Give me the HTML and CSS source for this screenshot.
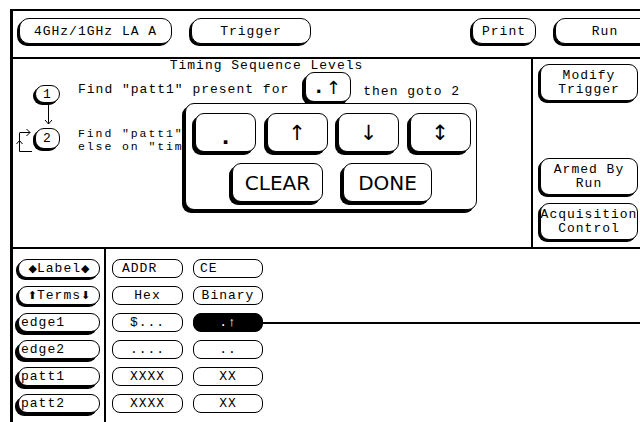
FILE: index.html
```html
<!DOCTYPE html>
<html lang="en">
<head>
<meta charset="UTF-8" />
<meta name="viewport" content="width=device-width, initial-scale=1" />
<title>Timing Sequence Levels</title>
<link rel="stylesheet" href="styles.css">
</head>
<body>

<div class="screen">
  <div class="topbar">
    <div class="key top k-mode">4GHz/1GHz LA A</div>
    <div class="key top k-menu">Trigger</div>
    <div class="key top k-print">Print</div>
    <div class="key top k-run">Run</div>
  </div>

  <div class="main">
    <div class="seq">
      <div class="seq-title">Timing Sequence Levels</div>

      <div class="level">
        <div class="key num">1</div>
        <div class="find">Find "patt1" present for</div>
        <div class="key dur">.<span class="dur-arrow">↑</span></div>
        <div class="then">then goto 2</div>
      </div>

      <div class="connector">
        <svg width="12" height="24" viewBox="0 0 12 24">
          <path d="M5.5 2 V22 M2 18 L5.5 22 L9 18" fill="none" stroke="#000" stroke-width="1"/>
        </svg>
      </div>

      <div class="level level-two">
        <svg class="loop" width="19" height="26" viewBox="0 0 19 26">
          <path d="M3.5 6 V24.5 H16 M3.5 5.5 H14 M10.5 2 L14 5.5 L10.5 9 M0.5 17 L3.5 13.5 L6.5 17" fill="none" stroke="#000" stroke-width="1"/>
        </svg>
        <div class="key num num-two">2</div>
        <div class="find find-two">Find "patt1"<br>else on "tim</div>
      </div>

      <div class="popup">
        <div class="popup-row">
          <div class="key pick"><span class="dot">.</span></div>
          <div class="key pick">↑</div>
          <div class="key pick">↓</div>
          <div class="key pick">↕</div>
        </div>
        <div class="popup-row popup-actions">
          <div class="key act act-clear">CLEAR</div>
          <div class="key act act-done">DONE</div>
        </div>
      </div>
    </div>

    <div class="side">
      <div class="key side-key">Modify<br>Trigger</div>
      <div class="key side-key armed">Armed By<br>Run</div>
      <div class="key side-key">Acquisition<br>Control</div>
    </div>
  </div>

  <div class="lower">
    <div class="labels">
      <div class="key lab lab-center"><span class="tri">◆</span>Label<span class="tri">◆</span></div>
      <div class="key lab lab-center"><span class="tri">⬆</span> Terms <span class="tri">⬇</span></div>
      <div class="key lab">edge1</div>
      <div class="key lab">edge2</div>
      <div class="key lab">patt1</div>
      <div class="key lab">patt2</div>
    </div>

    <div class="cells">
      <div class="cell left">ADDR</div>
      <div class="cell left small-pad">CE</div>
      <div class="cell">Hex</div>
      <div class="cell">Binary</div>
      <div class="cell">$...</div>
      <div class="cell active">.↑</div>
      <div class="cell">....</div>
      <div class="cell">..</div>
      <div class="cell">XXXX</div>
      <div class="cell">XX</div>
      <div class="cell">XXXX</div>
      <div class="cell">XX</div>
    </div>
  </div>
</div>

</body>
</html>
```

FILE: styles.css
```css
* {
  box-sizing: border-box;
}
body {
  margin: 0;
  width: 640px;
  height: 422px;
  overflow: hidden;
  background: #fff;
  color: #000;
  font-family: "Liberation Mono", "DejaVu Sans Mono", monospace;
  font-size: 13px;
  letter-spacing: 1px;
}
.screen {
  margin: 9px 0 0 10px;
  height: 413px;
  border-top: 2px solid #000;
  border-left: 3px solid #000;
}
.key {
  display: flex;
  align-items: center;
  justify-content: center;
  flex-shrink: 0;
  background: #fff;
  border: 1px solid #000;
  border-radius: 9px;
  box-shadow: -2px 2px 0 #000;
  white-space: nowrap;
}

/* top bar */
.topbar {
  display: flex;
  align-items: flex-start;
  height: 48px;
  padding: 7px 0 0 6px;
  border-bottom: 2px solid #000;
}
.top {
  height: 26px;
  border-radius: 10px;
}
.k-mode {
  width: 153px;
}
.k-menu {
  width: 120px;
  margin-left: 19px;
}
.k-print {
  width: 64px;
  margin-left: 161px;
}
.k-run {
  width: 100px;
  margin-left: 19px;
}

/* sequence area */
.main {
  display: grid;
  grid-template-columns: 520px 1fr;
  height: 190px;
  border-bottom: 2px solid #000;
}
.seq {
  position: relative;
  border-right: 2px solid #000;
}
.seq-title {
  height: 13px;
  line-height: 13px;
  padding-right: 11px;
  text-align: center;
}
.level {
  display: flex;
  align-items: flex-start;
  height: 30px;
}
.num {
  width: 25px;
  height: 18px;
  margin: 13px 0 0 22px;
}
.find {
  margin: 11px 0 0 18px;
  line-height: 13px;
}
.dur {
  width: 46px;
  height: 30px;
  margin-left: 16px;
  box-shadow: -3px 3px 0 #000;
  font-family: "DejaVu Sans", sans-serif;
  font-size: 17px;
  font-weight: bold;
  letter-spacing: 0;
}
.dur-arrow {
  margin-left: 4px;
  font-weight: normal;
  font-size: 18px;
}
.then {
  margin: 13px 0 0 12px;
  line-height: 13px;
}
.connector {
  height: 24px;
  padding-left: 30px;
}
.connector svg {
  display: block;
}
.level-two {
  height: 40px;
}
.loop {
  margin: 1px 0 0 3px;
}
.num-two {
  height: 21px;
  margin: 2px 0 0 0;
}
.find-two {
  margin-top: 1px;
  font-size: 11.5px;
  letter-spacing: 1.9px;
  line-height: 13px;
}

/* level picker pop-up */
.popup {
  position: absolute;
  left: 172px;
  top: 44px;
  width: 292px;
  height: 107px;
  padding: 9px 7px 0 9px;
  background: #fff;
  border: 1px solid #000;
  border-radius: 9px;
  box-shadow: -3px 3px 0 #000;
}
.popup-row {
  display: flex;
  gap: 10.5px;
}
.pick {
  width: 61px;
  height: 39px;
  box-shadow: -3px 3px 0 #000;
  font-family: "DejaVu Sans", sans-serif;
  font-size: 21px;
  letter-spacing: 0;
}
.dot {
  font-weight: bold;
  font-size: 20px;
  margin-top: 8px;
}
.popup-actions {
  justify-content: center;
  gap: 20px;
  margin-top: 11px;
}
.act {
  height: 39px;
  box-shadow: -3px 3px 0 #000;
  font-family: "DejaVu Sans", sans-serif;
  font-size: 20px;
  letter-spacing: 0;
}
.act-clear {
  width: 91px;
}
.act-done {
  width: 89px;
}

/* right column */
.side {
  display: flex;
  flex-direction: column;
  align-items: flex-start;
  padding: 5px 0 7px 7px;
}
.side-key {
  width: 98px;
  height: 37px;
  line-height: 14px;
  text-align: center;
}
.armed {
  margin-top: auto;
  margin-bottom: 8px;
}

/* label / terms table */
.lower {
  display: grid;
  grid-template-columns: 93px 1fr;
  height: 173px;
}
.labels {
  display: flex;
  flex-direction: column;
  gap: 8px;
  padding: 10px 0 0 5px;
  border-right: 2px solid #000;
}
.lab {
  width: 82px;
  height: 19px;
  justify-content: flex-start;
  padding-left: 2px;
  box-shadow: -3px 3px 0 #000;
}
.lab-center {
  justify-content: center;
  padding-left: 0;
  box-shadow: -2px 2px 0 #000;
}
.tri {
  font-family: "DejaVu Sans", sans-serif;
  font-size: 11px;
  letter-spacing: 0;
}
.cells {
  display: grid;
  grid-template-columns: 71px 70px;
  grid-auto-rows: 19px;
  column-gap: 10px;
  row-gap: 8px;
  padding: 10px 0 0 6px;
}
.cell {
  display: flex;
  align-items: center;
  justify-content: center;
  border: 1px solid #000;
  border-radius: 8px;
  white-space: nowrap;
}
.cell.left {
  justify-content: flex-start;
  padding-left: 9px;
}
.cell.small-pad {
  padding-left: 6px;
}
.cell.active {
  position: relative;
  background: #000;
  color: #fff;
}
.cell.active::after {
  content: "";
  position: absolute;
  left: 100%;
  top: 8px;
  width: 400px;
  height: 2px;
  background: #000;
}
```
